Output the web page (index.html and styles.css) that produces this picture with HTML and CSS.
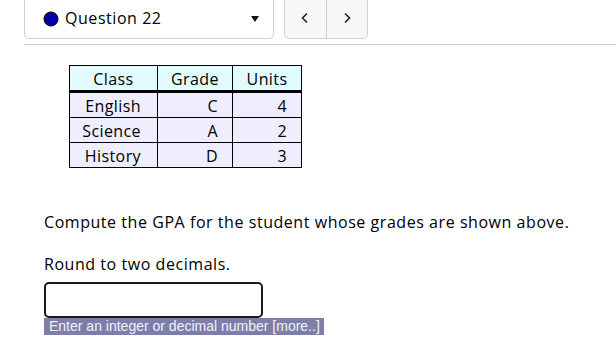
FILE: index.html
```html
<!DOCTYPE html>
<html lang="en">
<head>
    <meta charset="UTF-8">
    <meta name="viewport" content="width=device-width, initial-scale=1.0">
    <title>Question 22</title>
    <link rel="stylesheet" href="styles.css">
</head>
<body>

    <header class="topbar">
        <!-- Question picker -->
        <div class="question-select">
            <svg class="status-dot" width="16" height="16" viewBox="0 0 16 16">
                <circle cx="8" cy="8" r="7" fill="#0000a8" stroke="#000" stroke-width="1"/>
            </svg>
            <span class="question-label">Question 22</span>
            <svg class="caret" width="8" height="6" viewBox="0 0 8 6">
                <polygon points="0,0 8,0 4,6" fill="#111"/>
            </svg>
        </div>

        <!-- Prev / next buttons -->
        <div class="nav-buttons">
            <button class="nav-btn" title="Previous">
                <svg width="8" height="12" viewBox="0 0 8 12">
                    <polyline points="6,1.5 1.5,6 6,10.5" fill="none" stroke="#222" stroke-width="1.6"/>
                </svg>
            </button>
            <button class="nav-btn" title="Next">
                <svg width="8" height="12" viewBox="0 0 8 12">
                    <polyline points="2,1.5 6.5,6 2,10.5" fill="none" stroke="#222" stroke-width="1.6"/>
                </svg>
            </button>
        </div>
    </header>

    <section class="question">
        <table class="grades">
            <thead>
                <tr>
                    <th class="col-class">Class</th>
                    <th class="col-grade">Grade</th>
                    <th class="col-units">Units</th>
                </tr>
            </thead>
            <tbody>
                <tr><td>English</td><td>C</td><td>4</td></tr>
                <tr><td>Science</td><td>A</td><td>2</td></tr>
                <tr><td>History</td><td>D</td><td>3</td></tr>
            </tbody>
        </table>

        <p class="prompt">Compute the GPA for the student whose grades are shown above.</p>
        <p class="prompt round">Round to two decimals.</p>

        <div class="answer">
            <input type="text" class="answer-box" aria-label="Answer">
            <div class="hint">Enter an integer or decimal number [more..]</div>
        </div>
    </section>

</body>
</html>
```

FILE: styles.css
```css
body {
    font-family: "Open Sans", sans-serif;
    font-size: 16px;
    letter-spacing: 0.55px;
    color: #000;
    margin: 0;
    padding: 0;
    background-color: #fff;
}

.topbar {
    display: flex;
    gap: 10px;
    margin-left: 24px;
    padding-bottom: 5px;
    border-bottom: 1px solid #c8c8c8;
}

.question-select {
    display: flex;
    align-items: center;
    width: 250px;
    height: 45px;
    margin-top: -6px;
    padding-top: 6px;
    box-sizing: border-box;
    border: 1px solid #cfcfcf;
    border-radius: 5px;
    background-color: #fff;
}

.status-dot {
    margin-left: 18px;
    margin-top: -2px;
}

.question-label {
    margin-left: 6px;
    margin-top: -3px;
    flex: 1;
}

.caret {
    margin-right: 14px;
    margin-top: -2px;
}

.nav-buttons {
    display: flex;
    width: 84px;
    height: 45px;
    margin-top: -6px;
    box-sizing: border-box;
    border: 1px solid #cfcfcf;
    border-radius: 5px;
    background-color: #f7f7f7;
    overflow: hidden;
}

.nav-btn {
    flex: 1;
    padding: 6px 0 0 0;
    border: none;
    background: none;
    cursor: pointer;
    display: flex;
    align-items: center;
    justify-content: center;
}

.nav-btn + .nav-btn {
    border-left: 1px solid #cfcfcf;
}

.nav-btn svg {
    margin-top: -4px;
}

.question {
    padding: 20px 0 0 44px;
}

.grades {
    margin-left: 25px;
    border-collapse: collapse;
    background-color: #efeefe;
    letter-spacing: 0.4px;
}

.grades th,
.grades td {
    border: 1px solid #000;
    height: 22px;
    padding: 2px 14px 0 0;
    text-align: right;
    line-height: 20px;
}

.grades th {
    background-color: #e2fbff;
    text-align: center;
    padding: 2px 0 0 0;
    font-weight: normal;
    border-bottom: 3px solid #000;
}

.col-class {
    width: 87px;
}

.col-grade {
    width: 74px;
}

.col-units {
    width: 68px;
}

.grades td:first-child {
    padding-right: 16px;
}

.prompt {
    margin: 42px 0 0 0;
    line-height: 24px;
}

.prompt.round {
    margin-top: 18px;
}

.answer {
    margin-top: 6px;
}

.answer-box {
    display: block;
    width: 219px;
    height: 36px;
    box-sizing: border-box;
    border: 2px solid #1a1a1a;
    border-radius: 5px;
    padding: 4px 6px;
    font-size: 16px;
}

.hint {
    width: fit-content;
    margin-top: 0;
    padding: 0 4px 0 5px;
    height: 17px;
    line-height: 17px;
    font-family: "Liberation Sans", Arial, sans-serif;
    font-size: 14px;
    letter-spacing: 0;
    color: #f2f2f8;
    background-color: #7e7eaa;
}
```
